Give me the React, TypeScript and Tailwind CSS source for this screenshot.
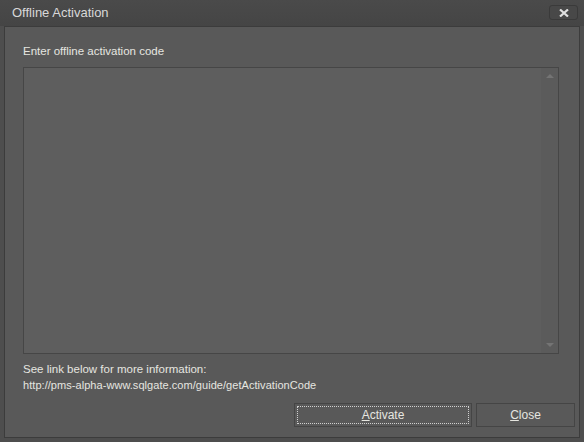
import { useState } from "react";

export default function App() {
    const [code, setCode] = useState("");

    return <div className="w-[584px] h-[442px] bg-[#4e4e4e] flex flex-col font-['Liberation_Sans',sans-serif] text-[#e6e6e0] select-none">
        <div className="h-[26px] flex items-center justify-between pl-[12px] pr-[6px] bg-gradient-to-b from-[#4a4a4a] to-[#454545]">
            <span className="text-[13px] text-[#d8d8d8]">Offline Activation</span>
            <button className="w-[29px] h-[15px] mb-[1px] rounded-[3px] border border-[#3a3a3a] bg-[#484848] flex items-center justify-center">
                <svg width="10" height="8" viewBox="0 0 10 8">
                    <path d="M1 0.5 L9 7.5 M9 0.5 L1 7.5" stroke="#e0e0e0" strokeWidth="2.2"/>
                </svg>
            </button>
        </div>
        <div className="flex-1 mx-[4px] mb-[4px] border border-[#3c3c3c] bg-[#595959] flex flex-col pl-[18px] pr-[20px] pt-[16px] pb-[10px]">
            <span className="text-[11.5px] leading-[16px]">Enter offline activation code</span>
            <div className="mt-[8px] h-[287px] flex border border-[#464646] bg-[#5e5e5e]">
                <textarea value={code} onChange={(e) => setCode(e.target.value)} className="flex-1 resize-none bg-transparent outline-none text-[12px] p-1"/>
                <div className="w-[17px] flex flex-col items-center justify-between py-[6px] bg-[#5b5b5b]">
                    <svg width="8" height="4" viewBox="0 0 8 4"><path d="M4 0 L8 4 L0 4 Z" fill="#747474"/></svg>
                    <svg width="8" height="4" viewBox="0 0 8 4"><path d="M0 0 L8 0 L4 4 Z" fill="#747474"/></svg>
                </div>
            </div>
            <span className="mt-[7px] text-[11.5px] leading-[16px]">See link below for more information:</span>
            <span className="text-[11px] leading-[16px] tracking-[0.05px]">http://pms-alpha-www.sqlgate.com/guide/getActivationCode</span>
            <div className="mt-auto flex justify-end gap-[4px] -mr-[16px]">
                <button className="w-[178px] h-[24px] border border-[#454545] bg-[#595959] p-[2px] text-[12px]">
                    <div className="w-full h-full border border-dotted border-[#d0d0d0] flex items-center justify-center"><span><u>A</u>ctivate</span></div>
                </button>
                <button className="w-[99px] h-[24px] border border-[#454545] bg-[#595959] text-[12px]"><u>C</u>lose</button>
            </div>
        </div>
    </div>
}
